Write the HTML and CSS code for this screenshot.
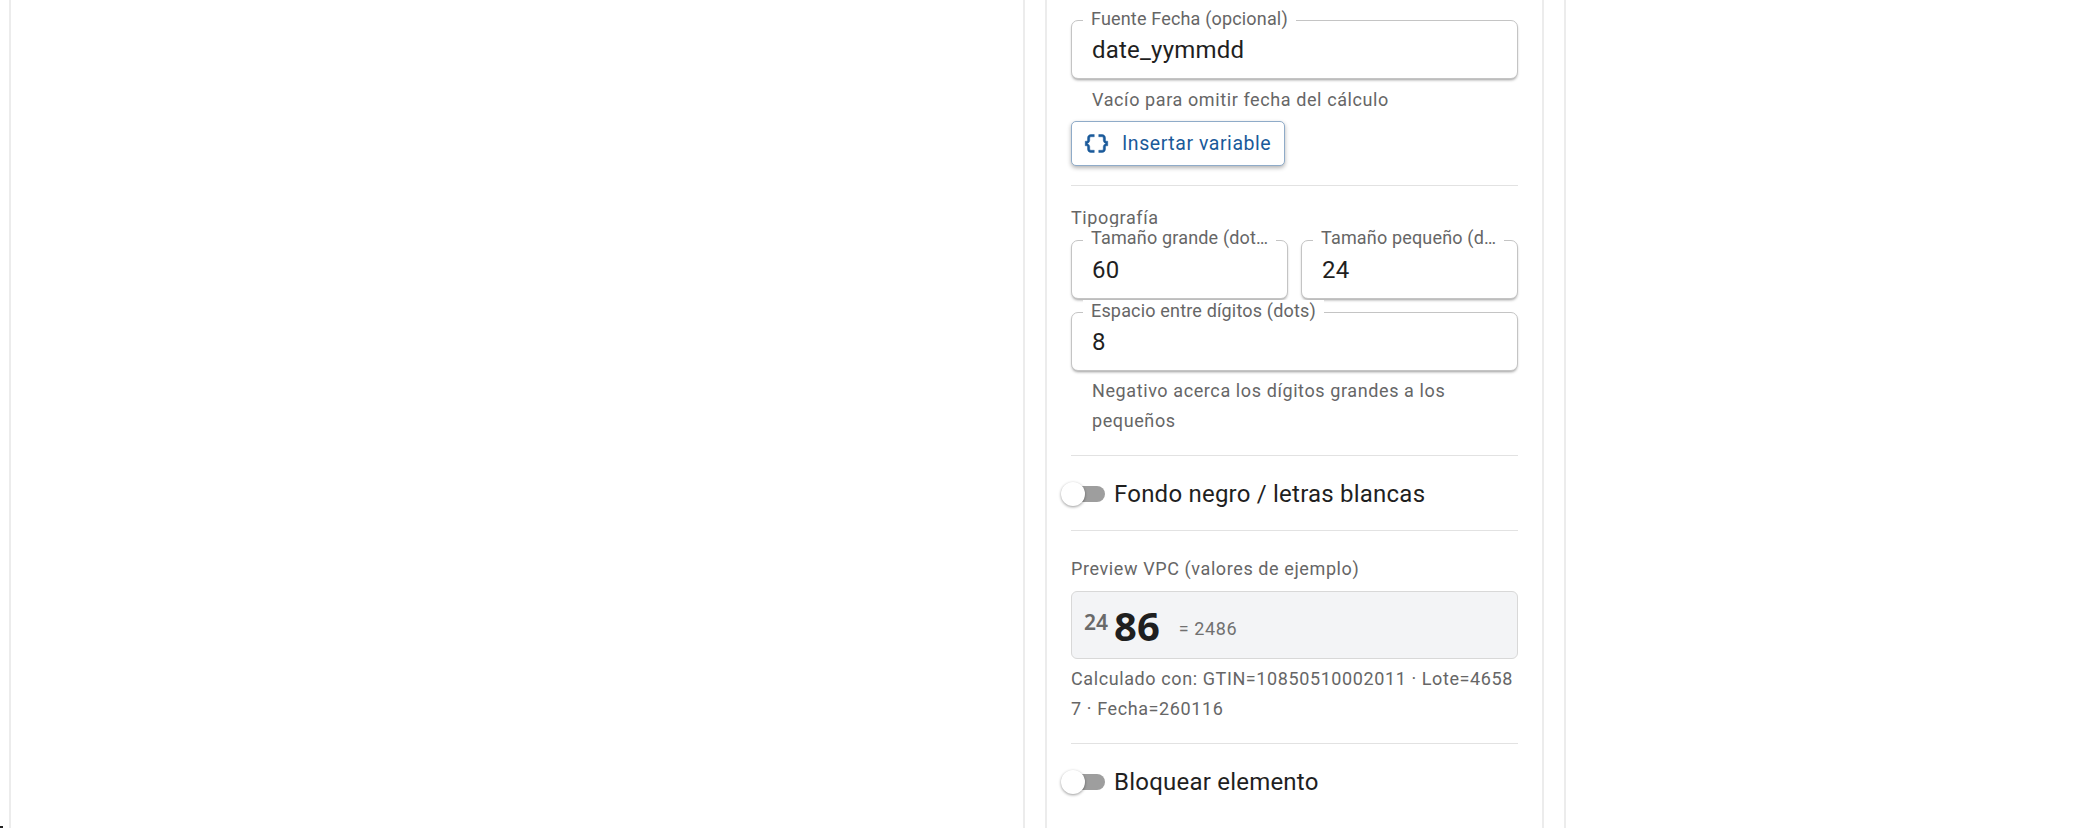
FILE: index.html
```html
<!DOCTYPE html>
<html lang="es">
<head>
    <meta charset="UTF-8">
    <title>Editor de etiqueta</title>
    <link rel="stylesheet" href="styles.css">
</head>
<body>
    <div class="canvas-area"></div>
    <aside class="panel">
        <div class="card">
            <div class="field">
                <span class="field-label">Fuente Fecha (opcional)</span>
                <span class="field-value">date_yymmdd</span>
            </div>
            <p class="helper helper-first">Vacío para omitir fecha del cálculo</p>
            <button type="button" class="var-button">
                <svg class="var-icon" viewBox="0 0 24 24"><path d="M4 7v2c0 .55-.45 1-1 1H2v4h1c.55 0 1 .45 1 1v2c0 1.65 1.35 3 3 3h3v-2H7c-.55 0-1-.45-1-1v-2c0-1.3-.84-2.42-2-2.83v-.34C5.16 11.42 6 10.3 6 9V7c0-.55.45-1 1-1h3V4H7C5.35 4 4 5.35 4 7zm17 3c-.55 0-1-.45-1-1V7c0-1.65-1.35-3-3-3h-3v2h3c.55 0 1 .45 1 1v2c0 1.3.84 2.42 2 2.83v.34c-1.16.41-2 1.52-2 2.83v2c0 .55-.45 1-1 1h-3v2h3c1.65 0 3-1.35 3-3v-2c0-.55.45-1 1-1h1v-4h-1z"/></svg>
                Insertar variable
            </button>
            <hr class="divider">

            <div class="section-title">Tipografía</div>
            <div class="field-row">
                <div class="field">
                    <span class="field-label">Tamaño grande (dot…</span>
                    <span class="field-value">60</span>
                </div>
                <div class="field">
                    <span class="field-label">Tamaño pequeño (d…</span>
                    <span class="field-value">24</span>
                </div>
            </div>
            <div class="field">
                <span class="field-label">Espacio entre dígitos (dots)</span>
                <span class="field-value">8</span>
            </div>
            <p class="helper">Negativo acerca los dígitos grandes a los pequeños</p>
            <hr class="divider">

            <div class="switch-row">
                <span class="switch"><span class="switch-thumb"></span></span>
                <span class="switch-label">Fondo negro / letras blancas</span>
            </div>
            <hr class="divider divider-tight">

            <div class="preview-title">Preview VPC (valores de ejemplo)</div>
            <div class="preview-box">
                <span class="digits-small">24</span>
                <span class="digits-big">86</span>
                <span class="digits-total">= 2486</span>
            </div>
            <p class="preview-note">Calculado con: GTIN=10850510002011 · Lote=46587 · Fecha=260116</p>
            <hr class="divider">

            <div class="switch-row">
                <span class="switch"><span class="switch-thumb"></span></span>
                <span class="switch-label">Bloquear elemento</span>
            </div>
        </div>
    </aside>
    <div class="corner-speck"></div>
</body>
</html>
```

FILE: styles.css
```css
* {
    box-sizing: border-box;
}

html,
body {
    height: 828px;
    overflow: hidden;
}

body {
    margin: 0;
    display: flex;
    background-color: #fff;
    font-family: Roboto, "Liberation Sans", sans-serif;
    color: #1f1f1f;
}

.canvas-area {
    width: 1014px;
    margin-left: 9px;
    border-left: 2px solid #ececec;
}

.panel {
    width: 543px;
    padding: 0 20px;
    border-left: 2px solid #ececec;
    border-right: 2px solid #ececec;
}

.card {
    height: 828px;
    padding: 20px 24px 0;
    border-left: 2px solid #ececec;
    border-right: 2px solid #ececec;
}

.corner-speck {
    position: absolute;
    left: 0;
    bottom: 0;
    width: 3px;
    height: 2px;
    background-color: #222;
}

/* champs */
.field {
    position: relative;
    height: 59px;
    padding-left: 20px;
    border: 1px solid #c4c4c4;
    border-radius: 7px;
    background-color: #fff;
    box-shadow: 0 2px 3px -1px rgba(0, 0, 0, 0.4);
    display: flex;
    align-items: center;
}

.field-label {
    position: absolute;
    top: -13px;
    left: 11px;
    padding: 0 8px;
    background-color: #fff;
    font-size: 18px;
    line-height: 22px;
    letter-spacing: 0.17px;
    white-space: nowrap;
    color: #666;
}

.field-value {
    font-size: 24px;
    letter-spacing: 0.22px;
}

.field-row {
    display: flex;
    gap: 13px;
    margin-bottom: 13px;
}

.field-row .field {
    flex: 1;
    min-width: 0;
}

.field-row .field-label {
    top: -14px;
}

.helper {
    margin: 5px 0 6px;
    padding-left: 21px;
    font-size: 18px;
    line-height: 30px;
    letter-spacing: 0.6px;
    color: #666;
}

.helper-first {
    margin-top: 6px;
}

/* bouton */
.var-button {
    display: flex;
    align-items: center;
    gap: 12px;
    height: 45px;
    margin-top: 1px;
    padding: 0 13px 0 11px;
    border: 1px solid #8fabc8;
    border-radius: 5px;
    background-color: #fff;
    box-shadow: 0 2px 4px rgba(0, 0, 0, 0.3);
    font-family: inherit;
    font-size: 19.5px;
    letter-spacing: 0.55px;
    color: #1a5a9a;
}

.var-icon {
    width: 27px;
    height: 27px;
    fill: #1a5a9a;
    stroke: #1a5a9a;
    stroke-width: 0.4;
}

.divider {
    height: 1px;
    margin: 19px 0 0;
    border: 0;
    background-color: #e2e2e2;
}

.section-title {
    margin-top: 19px;
    height: 35px;
    font-size: 18px;
    line-height: 26px;
    letter-spacing: 0.6px;
    color: #666;
}

/* interrupteurs */
.switch-row {
    display: flex;
    align-items: center;
    height: 74px;
    padding-top: 2px;
}

.switch {
    position: relative;
    width: 35px;
    height: 16px;
    margin-left: -1px;
    margin-right: 9px;
    border-radius: 0 8px 8px 0;
    background-color: #9e9e9e;
}

.switch-thumb {
    position: absolute;
    top: -4px;
    left: -9px;
    width: 24px;
    height: 24px;
    border-radius: 50%;
    background-color: #fff;
    box-shadow: 0 1px 3px rgba(0, 0, 0, 0.4);
}

.switch-label {
    font-size: 24px;
    letter-spacing: 0.22px;
}

.divider-tight {
    margin-top: 0;
}

/* aperçu */
.preview-title {
    margin-top: 23px;
    margin-bottom: 7px;
    font-size: 18px;
    line-height: 30px;
    letter-spacing: 0.6px;
    color: #666;
}

.preview-box {
    display: flex;
    align-items: center;
    height: 68px;
    padding-left: 12px;
    border: 1px solid #d8d8d8;
    border-radius: 6px;
    background-color: #f3f4f6;
}

.digits-small {
    margin-bottom: 6px;
    font-family: "Noto Sans", sans-serif;
    font-size: 21px;
    font-weight: 600;
    color: #6a6a6a;
}

.digits-big {
    margin-left: 6px;
    font-family: "Noto Sans", sans-serif;
    font-size: 40px;
    font-weight: 700;
}

.digits-total {
    margin-left: 19px;
    margin-top: 6px;
    font-size: 18px;
    letter-spacing: 0.6px;
    color: #707070;
}

.preview-note {
    margin: 5px 0 1px;
    font-size: 18px;
    line-height: 30px;
    letter-spacing: 0.6px;
    word-break: break-all;
    color: #666;
}
```
